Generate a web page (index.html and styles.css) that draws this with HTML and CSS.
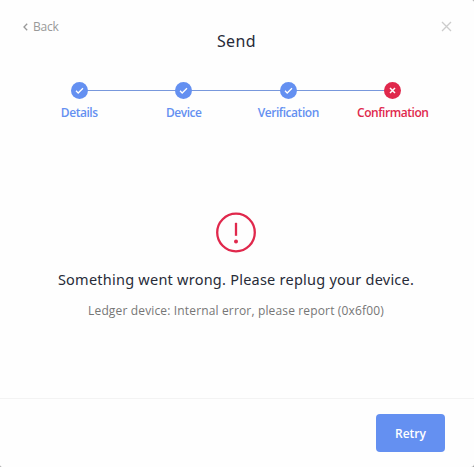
FILE: index.html
```html
<!DOCTYPE html>
<html lang="en">
<head>
    <meta charset="UTF-8">
    <meta name="viewport" content="width=device-width, initial-scale=1.0">
    <title>Send</title>
    <link rel="stylesheet" href="styles.css">
</head>
<body>
    <div class="modal">
        <header class="modal-header">
            <a class="back">
                <svg width="5" height="8" viewBox="0 0 5 8"><path d="M4.2 0.8L1 4l3.2 3.2"/></svg>
                <span>Back</span>
            </a>
            <h1>Send</h1>
            <a class="close">
                <svg width="11" height="11" viewBox="0 0 11 11"><path d="M1 1l9 9M10 1l-9 9"/></svg>
            </a>
        </header>
        <ol class="stepper">
            <li class="step">
                <svg class="dot" viewBox="0 0 10 10"><path d="M1.5 5.3l2.2 2.2 4.8-4.8"/></svg>
                <span class="step-label">Details</span>
            </li>
            <li class="step">
                <svg class="dot" viewBox="0 0 10 10"><path d="M1.5 5.3l2.2 2.2 4.8-4.8"/></svg>
                <span class="step-label">Device</span>
            </li>
            <li class="step">
                <svg class="dot" viewBox="0 0 10 10"><path d="M1.5 5.3l2.2 2.2 4.8-4.8"/></svg>
                <span class="step-label">Verification</span>
            </li>
            <li class="step error">
                <svg class="dot" viewBox="0 0 10 10"><path d="M2.5 2.5l5 5M7.5 2.5l-5 5"/></svg>
                <span class="step-label">Confirmation</span>
            </li>
        </ol>
        <main class="content">
            <svg class="alert" width="42" height="42" viewBox="0 0 42 42">
                <circle cx="21" cy="20.5" r="18.8"/>
                <path d="M21 10.8v13"/>
                <circle class="point" cx="21" cy="29.5" r="2"/>
            </svg>
            <h2>Something went wrong. Please replug your device.</h2>
            <p>Ledger device: Internal error, please report (0x6f00)</p>
        </main>
        <footer class="modal-footer">
            <button type="button">Retry</button>
        </footer>
    </div>
</body>
</html>
```
FILE: styles.css
```css
:root {
    --blue: #6490f1;
    --red: #e0284c;
    --dark: #272b38;
    --grey: #767676;
}
* {
    box-sizing: border-box;
}
html, body {
    height: 100%;
    margin: 0;
    background: #999;
    font-family: 'Open Sans', 'Noto Sans', sans-serif;
    overflow: hidden;
}
.modal {
    height: 467px;
    display: flex;
    flex-direction: column;
    background: #fefefe;
    border-radius: 0 2px 3px 2px;
}
svg {
    display: block;
    fill: none;
    stroke: currentColor;
}
.modal-header {
    display: flex;
    justify-content: space-between;
    height: 82px;
    padding: 19px 22px 0 23px;
}
.back, .close {
    display: flex;
    width: 60px;
    color: #999;
    font-size: 12px;
    line-height: 16px;
    letter-spacing: -0.2px;
}
.back {
    gap: 5px;
}
.back svg {
    margin-top: 4px;
    stroke-width: 1.3;
}
.close {
    justify-content: flex-end;
    color: #ccc;
}
.close svg {
    margin-top: 2px;
    stroke-width: 1.3;
}
h1 {
    margin: 11px 2px 0 0;
    color: var(--dark);
    font-family: 'Noto Sans', sans-serif;
    font-size: 16px;
    font-weight: 400;
    line-height: 22px;
    letter-spacing: 0.4px;
}
.stepper {
    display: flex;
    margin: 0 29px 0 27px;
    padding: 0;
    list-style: none;
    /* line runs from the first dot to the last one */
    background: linear-gradient(#7898dc, #7898dc) center 8px / 75% 1px no-repeat;
}
.step {
    flex: 1;
    display: flex;
    flex-direction: column;
    align-items: center;
    color: var(--blue);
}
.dot {
    width: 17px;
    height: 17px;
    padding: 3.5px;
    border-radius: 50%;
    background: var(--blue);
    color: #fff;
    stroke-width: 1.3;
}
.error {
    color: var(--red);
}
.error .dot {
    background: var(--red);
    stroke-width: 1.5;
}
.step-label {
    margin-top: 6px;
    font-size: 12px;
    font-weight: 600;
    line-height: 16px;
    letter-spacing: -0.45px;
}
.content {
    flex: 1;
    display: flex;
    flex-direction: column;
    align-items: center;
    padding: 91px 2px 0 0;
}
.alert {
    color: var(--red);
    stroke-width: 2.3;
}
.alert .point {
    fill: currentColor;
    stroke: none;
}
h2 {
    margin: 14px 0 0;
    color: var(--dark);
    font-family: 'Noto Sans', sans-serif;
    font-size: 14.5px;
    font-weight: 400;
    line-height: 22px;
    letter-spacing: 0.24px;
    white-space: nowrap;
}
p {
    margin: 12px 0 0;
    color: var(--grey);
    font-size: 12px;
    line-height: 18px;
    letter-spacing: 0.15px;
    white-space: nowrap;
}
.modal-footer {
    display: flex;
    justify-content: flex-end;
    height: 69px;
    padding: 15px 29px 0 0;
    border-top: 1px solid #f3f3f3;
}
button {
    width: 69px;
    height: 38px;
    padding: 0;
    border: none;
    border-radius: 4px;
    background: var(--blue);
    color: #fff;
    font-family: inherit;
    font-size: 12px;
    font-weight: 600;
}
```
